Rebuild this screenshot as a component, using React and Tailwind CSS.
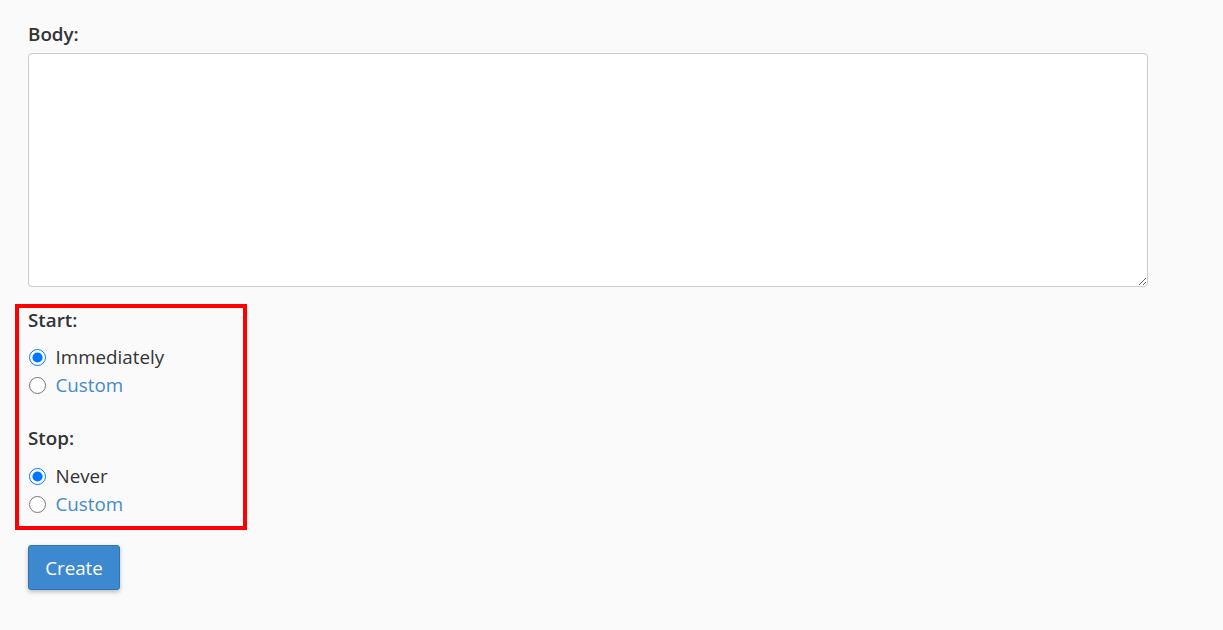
import React from 'react'

function RadioRow({ name, label, checked, link }) {
  return (
    <label className="flex items-center h-[28px]">
      <input
        type="radio"
        name={name}
        defaultChecked={checked}
        className="w-[17px] h-[17px] m-0 ml-[0.5px] accent-[#0075ff]"
      />
      <span className={'ml-[10px] ' + (link ? 'text-[#428bca]' : 'text-[#333333]')}>{label}</span>
    </label>
  )
}

export default function App() {
  return (
    <div className="min-h-screen bg-[#fafafa] pl-[28px] pt-[22px] text-[18.8px] text-[#333333] [font-family:'Open_Sans',sans-serif]">
      <div className="h-[24px] leading-[24px] font-semibold">Body:</div>
      <textarea className="block mt-[7px] w-[1120px] h-[234px] bg-white border border-[#cccccc] rounded-[4px] outline-none" />

      <div className="mt-[17px] -ml-[13px] w-[232px] border-4 border-[#ff0000] pl-[9px] pb-[8px]">
        <div className="h-[24px] leading-[24px] font-semibold">Start:</div>
        <div className="mt-[11px]">
          <RadioRow name="start" label="Immediately" checked />
          <RadioRow name="start" label="Custom" link />
        </div>
        <div className="mt-[27px] h-[24px] leading-[24px] font-semibold">Stop:</div>
        <div className="mt-[12px]">
          <RadioRow name="stop" label="Never" checked />
          <RadioRow name="stop" label="Custom" link />
        </div>
      </div>

      <button className="mt-[15px] w-[92px] h-[45px] pt-[1px] bg-[#3d89cf] border border-[#2f74b3] rounded-[3px] text-white shadow-[0_2px_4px_rgba(0,0,0,0.25)]">
        Create
      </button>
    </div>
  )
}
